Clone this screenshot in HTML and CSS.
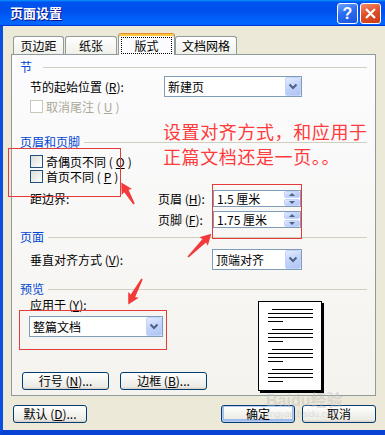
FILE: index.html
```html
<!DOCTYPE html>
<html>
<head>
<meta charset="utf-8">
<title>页面设置</title>
<link rel="stylesheet" href="styles.css">
</head>
<body>
<div class="window">
  <div class="titlebar">
    <span class="title">页面设置</span>
    <div class="tb-buttons">
      <span class="tb-btn help">?</span>
      <span class="tb-btn close"><svg width="13" height="13" viewBox="0 0 13 13"><path d="M2 2 L11 11 M11 2 L2 11" stroke="#fff" stroke-width="2.2" fill="none"/></svg></span>
    </div>
  </div>
  <div class="client">
    <div class="tabs">
      <div class="tab t1">页边距</div>
      <div class="tab t2">纸张</div>
      <div class="tab active"><span class="focus">版式</span></div>
      <div class="tab t4">文档网格</div>
    </div>
    <div class="panel">
      <div class="group g-jie"><span class="g-text">节</span><i class="rule"></i></div>
      <div class="row r-start">
        <span class="lbl">节的起始位置 (<u>R</u>):</span>
        <div class="combo">新建页<span class="drop"><svg width="10" height="7" viewBox="0 0 10 7"><path d="M1.5 1.5 L5 5 L8.5 1.5" stroke="#4d6185" stroke-width="2" fill="none"/></svg></span></div>
      </div>
      <div class="check disabled"><span class="box"></span>取消尾注 (<u>U</u>)</div>
      <div class="group g-hf"><span class="g-text">页眉和页脚</span><i class="rule"></i></div>
      <div class="check c1"><span class="box"></span>奇偶页不同 (<u>O</u>)</div>
      <div class="check c2"><span class="box"></span>首页不同 (<u>P</u>)</div>
      <div class="margins">
        <span class="m-label">距边界:</span>
        <div class="spins">
          <div class="spin-row"><span class="s-lbl">页眉 (<u>H</u>):</span><div class="spin">1.5 厘米<span class="spin-btns"><i class="up"></i><i class="down"></i></span></div></div>
          <div class="spin-row"><span class="s-lbl">页脚 (<u>F</u>):</span><div class="spin">1.75 厘米<span class="spin-btns"><i class="up"></i><i class="down"></i></span></div></div>
        </div>
      </div>
      <div class="group g-page"><span class="g-text">页面</span><i class="rule"></i></div>
      <div class="row r-valign">
        <span class="lbl">垂直对齐方式 (<u>V</u>):</span>
        <div class="combo">顶端对齐<span class="drop"><svg width="10" height="7" viewBox="0 0 10 7"><path d="M1.5 1.5 L5 5 L8.5 1.5" stroke="#4d6185" stroke-width="2" fill="none"/></svg></span></div>
      </div>
      <div class="group g-prev"><span class="g-text">预览</span><i class="rule"></i></div>
      <div class="preview">
        <div class="p-left">
          <span class="apply-lbl">应用于 (<u>Y</u>):</span>
          <div class="combo apply">整篇文档<span class="drop"><svg width="10" height="7" viewBox="0 0 10 7"><path d="M1.5 1.5 L5 5 L8.5 1.5" stroke="#4d6185" stroke-width="2" fill="none"/></svg></span></div>
          <div class="p-buttons">
            <span class="btn">行号 (<u>N</u>)...</span>
            <span class="btn">边框 (<u>B</u>)...</span>
          </div>
        </div>
        <div class="p-right">
          <div class="sheet">
            <svg width="62" height="88" viewBox="0 0 62 88">
              <g fill="#000">
                <rect x="13" y="7" width="41" height="1"/><rect x="9" y="11" width="45" height="1"/><rect x="9" y="15" width="45" height="1"/><rect x="9" y="19" width="15" height="1"/>
                <rect x="13" y="27" width="41" height="1"/><rect x="9" y="31" width="45" height="1"/><rect x="9" y="35" width="45" height="1"/><rect x="9" y="39" width="15" height="1"/>
                <rect x="13" y="47" width="41" height="1"/><rect x="9" y="51" width="45" height="1"/><rect x="9" y="55" width="45" height="1"/><rect x="9" y="59" width="15" height="1"/>
                <rect x="13" y="67" width="41" height="1"/><rect x="9" y="71" width="45" height="1"/><rect x="9" y="75" width="45" height="1"/><rect x="9" y="79" width="15" height="1"/>
              </g>
            </svg>
          </div>
        </div>
      </div>
    </div>
    <div class="bottom-row">
      <span class="btn b-default">默认 (<u>D</u>)...</span>
      <span class="btn b-ok">确定</span>
      <span class="btn b-cancel">取消</span>
    </div>
  </div>

  <div class="annot">
    <div class="note">设置对齐方式，和应用于<br>正篇文档还是一页。。</div>
    <div class="mark m1"></div>
    <div class="mark m2"></div>
    <div class="mark m3"></div>
    <svg class="arrows" width="385" height="435" viewBox="0 0 385 435">
      <g fill="#f23a3a">
        <polygon transform="translate(134,204) rotate(-120.6)" points="0,-0.8 15,-2.5 14,-6 25,0 14,6 15,2.5 0,0.8"/>
        <polygon transform="translate(188,257) rotate(-45)" points="0,-0.8 23,-2.5 22,-6 33,0 22,6 23,2.5 0,0.8"/>
        <polygon transform="translate(142,279) rotate(118.3)" points="0,-0.8 19,-2.5 18,-6 29,0 18,6 19,2.5 0,0.8"/>
      </g>
    </svg>
    <div class="watermark"><span class="wm-big">Baidu经验</span><span class="wm-small">jingyan.baidu.com</span></div>
  </div>
</div>
</body>
</html>
```

FILE: styles.css
```css
* { box-sizing: border-box; }
html, body { margin: 0; padding: 0; }
body {
  font-family: "Noto Sans CJK SC", "Noto Sans", sans-serif;
  font-size: 12px;
  color: #000;
  background: #ece9d8;
}
u { text-decoration: underline; text-underline-offset: 1px; }

.window {
  position: relative;
  width: 385px;
  height: 435px;
  display: flex;
  flex-direction: column;
  overflow: hidden;
  background: #ece9d8;
}

/* title bar */
.titlebar {
  height: 26px;
  flex: none;
  display: flex;
  align-items: center;
  justify-content: space-between;
  padding: 0 4px 0 10px;
  background: linear-gradient(180deg, #0997ff, #0053ee 8%, #0050ee 40%, #0066ff 88%, #0066ff 93%, #005bff 95%, #003dd7 96%, #003dd7);
}
.title {
  color: #fff;
  font-weight: bold;
  font-size: 13px;
  line-height: 16px;
  text-shadow: 1px 1px #0f1089;
}
.tb-buttons { display: flex; gap: 2px; }
.tb-btn {
  width: 21px;
  height: 21px;
  border: 1px solid #fff;
  border-radius: 3px;
  display: flex;
  align-items: center;
  justify-content: center;
  color: #fff;
}
.help {
  background: linear-gradient(160deg, #6ea3ff, #2a6cf0 45%, #1a55dc);
  font-family: "Liberation Sans", sans-serif;
  font-weight: bold;
  font-size: 16px;
  line-height: 19px;
}
.close {
  background: linear-gradient(160deg, #f0906c, #e0512a 45%, #c93a16);
}

/* client area */
.client {
  flex: 1;
  display: flex;
  flex-direction: column;
  border-left: 3px solid #0b4de0;
  border-bottom: 5px solid #0843d5;
  padding: 0 9px 0 8px;
}

.tabs {
  margin-top: 7px;
  height: 22px;
  margin-bottom: -1px;
  display: flex;
  align-items: flex-end;
  padding-left: 2px;
  position: relative;
  z-index: 2;
}
.tab {
  height: 18px;
  margin-bottom: 1px;
  border: 1px solid #919b9c;
  border-bottom: none;
  border-radius: 3px 3px 0 0;
  background: linear-gradient(180deg, #ffffff, #fafaf9 30%, #f0f0ea);
  text-align: center;
  line-height: 17px;
}
.t1 { width: 51px; margin-right: 1px; }
.t2 { width: 52px; margin-right: 1px; }
.t4 { width: 62px; }
.tab.active {
  width: 57px;
  height: 22px;
  margin-bottom: 0;
  background: #fcfcfe;
  border-top: 1px solid #e68b2c;
  box-shadow: inset 0 2px #ffc83c;
  padding-top: 3px;
  display: flex;
  justify-content: center;
}
.focus {
  display: block;
  width: 51px;
  height: 17px;
  border: 1px dotted #000;
  line-height: 15px;
  text-align: center;
}

/* panel */
.panel {
  height: 342px;
  border: 1px solid #919b9c;
  background: linear-gradient(180deg, #fcfcfe, #f4f3ee);
  padding: 0 8px;
  display: flex;
  flex-direction: column;
  position: relative;
  z-index: 1;
}

.group {
  height: 14px;
  display: flex;
  align-items: center;
  gap: 4px;
  color: #0046d5;
  line-height: 14px;
}
.rule { flex: 1; height: 1px; background: #d0d0bf; }
.g-jie { margin-top: 5px; }
.g-jie .rule { margin-left: 7px; }
.g-hf { margin-top: 22px; }
.g-page { margin-top: 2px; }
.g-prev { margin-top: 12px; }

.row {
  display: flex;
  align-items: center;
  height: 21px;
  margin-left: 10px;
}
.r-start { margin-top: 2px; }
.r-start .lbl { width: 134px; }
.r-start .combo { width: 138px; }
.r-valign { margin-top: 5px; }
.r-valign .lbl { width: 182px; }
.r-valign .combo { width: 90px; }

.lbl { line-height: 14px; }

.combo {
  height: 21px;
  border: 1px solid #7f9db9;
  background: #fff;
  display: flex;
  align-items: center;
  justify-content: space-between;
  padding-left: 3px;
  line-height: 14px;
}
.drop {
  width: 16px;
  height: 19px;
  border: 1px solid #c3d3fd;
  border-radius: 2px;
  background: linear-gradient(160deg, #e3ecff, #c1d3fb 50%, #b0c5f5);
  display: flex;
  align-items: center;
  justify-content: center;
}

.check {
  display: flex;
  align-items: center;
  gap: 3px;
  height: 13px;
  margin-left: 10px;
  line-height: 13px;
}
.box {
  width: 13px;
  height: 13px;
  border: 1px solid #1c5180;
  background: linear-gradient(135deg, #dcdcd7, #ffffff);
}
.check.disabled { margin-top: 3px; color: #aca899; }
.check.disabled .box { border-color: #cac8bb; background: #fff; }
.c1 { margin-top: 6px; }
.c2 { margin-top: 2px; }

.margins {
  margin-top: 7px;
  margin-left: 10px;
  height: 38px;
  display: flex;
}
.m-label { width: 128px; line-height: 17px; }
.spins { display: flex; flex-direction: column; gap: 4px; }
.spin-row { display: flex; align-items: center; height: 17px; }
.s-lbl { width: 55px; line-height: 14px; }
.spin {
  width: 88px;
  height: 17px;
  border: 1px solid #7f9db9;
  background: #fff;
  display: flex;
  align-items: center;
  justify-content: space-between;
  padding-left: 3px;
  line-height: 14px;
}
.spin-btns {
  width: 16px;
  height: 15px;
  display: flex;
  flex-direction: column;
  gap: 1px;
}
.spin-btns i {
  flex: 1;
  border: 1px solid #c3d3fd;
  border-radius: 2px;
  background: linear-gradient(160deg, #e3ecff, #c1d3fb 50%, #b0c5f5);
  position: relative;
}
.spin-btns i::after {
  content: "";
  position: absolute;
  left: 4px;
  top: 1px;
  border-left: 3px solid transparent;
  border-right: 3px solid transparent;
}
.spin-btns .up::after { border-bottom: 3px solid #4d6185; }
.spin-btns .down::after { border-top: 3px solid #4d6185; }

/* preview */
.preview {
  flex: 1;
  display: grid;
  grid-template-columns: 238px 1fr;
}
.p-left { display: flex; flex-direction: column; }
.apply-lbl { margin-top: 3px; margin-left: 10px; line-height: 12px; height: 12px; }
.combo.apply { margin-top: 5px; margin-left: 9px; width: 134px; }
.p-buttons { margin-top: 35px; margin-left: 2px; display: flex; gap: 11px; }
.p-buttons .btn { width: 87px; }

.sheet {
  margin-top: 5px;
  width: 64px;
  height: 90px;
  border: 1px solid #000;
  background: #fff;
  box-shadow: 2px 2px 0 #000;
}
.sheet svg { display: block; }

/* buttons */
.btn {
  height: 18px;
  border: 1px solid #003c74;
  border-radius: 3px;
  background: linear-gradient(180deg, #ffffff, #f3f3ef 50%, #ecebe6 85%, #d6d0c5);
  display: flex;
  align-items: center;
  justify-content: center;
  line-height: 14px;
}
.bottom-row {
  margin-top: 9px;
  padding-left: 2px;
  display: flex;
  gap: 7px;
}
.bottom-row .btn { width: 74px; }
.b-default { margin-right: auto; }
.b-ok { box-shadow: inset 0 0 0 1px #b6cdf3, inset 0 -1px 0 2px #a0bbec; }

/* annotations */
.annot {
  position: absolute;
  inset: 0;
  pointer-events: none;
  z-index: 5;
}
.note {
  position: absolute;
  left: 163px;
  top: 119px;
  font-size: 18px;
  letter-spacing: 0.6px;
  line-height: 25px;
  color: #ff3b3b;
  white-space: nowrap;
}
.mark { position: absolute; border: 1px solid #e63b3b; }
.m1 { left: 8px; top: 148px; width: 113px; height: 49px; }
.m2 { left: 212px; top: 184px; width: 90px; height: 55px; }
.m3 { left: 19px; top: 310px; width: 148px; height: 40px; }
.arrows { position: absolute; left: 0; top: 0; }
.watermark {
  position: absolute;
  left: 266px;
  top: 392px;
  display: flex;
  flex-direction: column;
  color: rgba(190, 190, 190, 0.45);
  font-family: "Liberation Sans", "Noto Sans CJK SC", sans-serif;
}
.wm-big { font-size: 16px; font-weight: bold; line-height: 17px; }
.wm-small { font-size: 9px; line-height: 10px; }
```
